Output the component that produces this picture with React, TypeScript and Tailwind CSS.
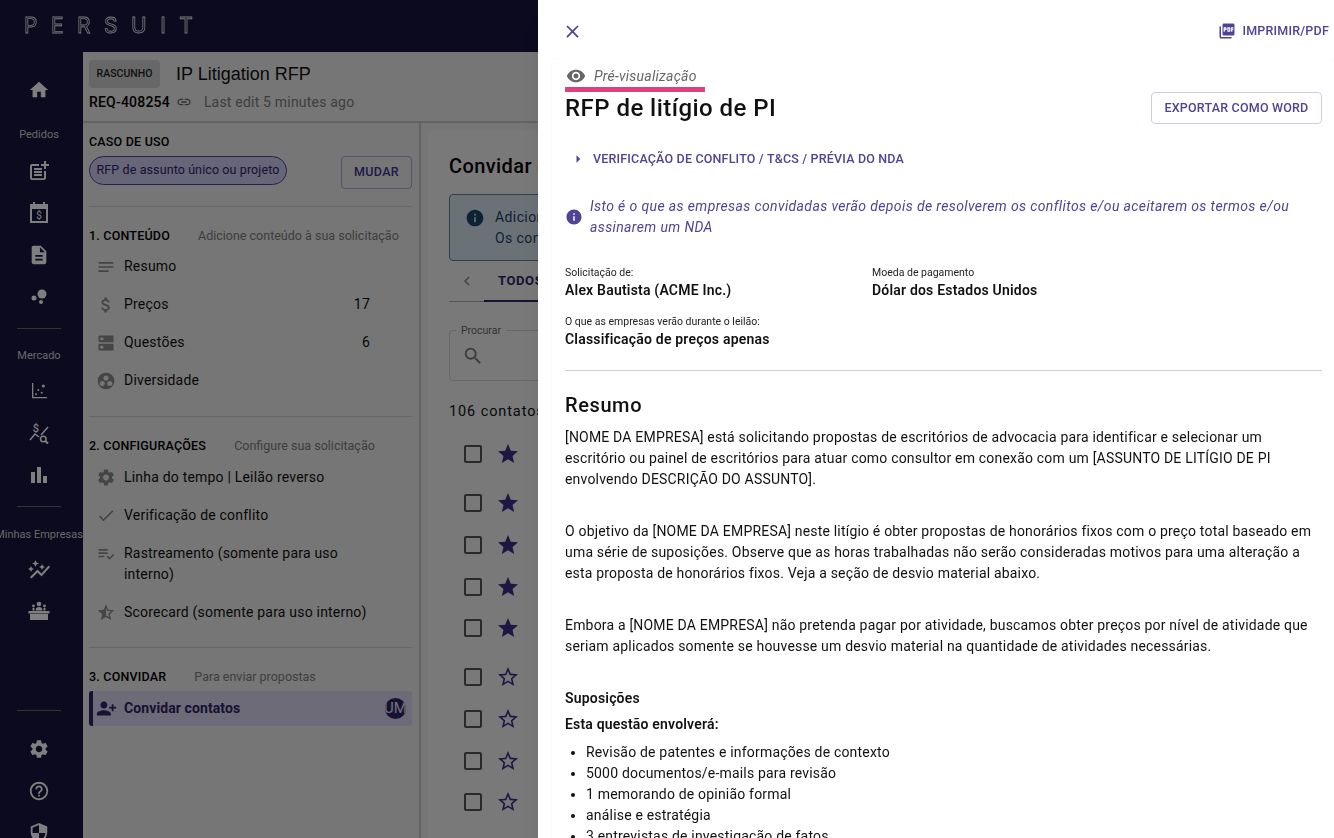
import type { ReactNode } from "react";
import {
  MdHome, MdPostAdd, MdDescription, MdBarChart, MdSettings, MdHelpOutline, MdSecurity, MdClose,
  MdPictureAsPdf, MdVisibility, MdInfo, MdArrowRight, MdSearch, MdStar, MdStarBorder,
  MdCheckBoxOutlineBlank, MdChevronLeft, MdLink, MdNotes, MdAttachMoney, MdDns, MdPersonAdd,
  MdCheck, MdStarHalf, MdPlaylistAddCheck, MdAutoGraph,
} from "react-icons/md";

function CalendarDollar() {
  return (
    <svg viewBox="0 0 24 24" className="h-6 w-6" fill="currentColor">
      <path d="M6 1h2v2h8V1h2v2h3v19H3V3h3V1zM5 8v12h14V8H5z" />
      <text x="12" y="18" fontSize="10" textAnchor="middle" fontFamily="Roboto, sans-serif">$</text>
    </svg>
  );
}

function Bubbles() {
  return (
    <svg viewBox="0 0 24 24" className="h-6 w-6" fill="currentColor">
      <circle cx="15" cy="9" r="4.500" />
      <circle cx="7" cy="13" r="2.500" />
      <circle cx="14" cy="17" r="2" />
    </svg>
  );
}

function Scatter() {
  return (
    <svg viewBox="0 0 24 24" className="h-6 w-6" fill="currentColor">
      <path d="M5 4h1.300v14H20v1.300H5z" />
      <circle cx="16.300" cy="7" r="1.500" />
      <circle cx="11.300" cy="11" r="1" />
      <circle cx="14.700" cy="13.700" r="1" />
      <circle cx="9" cy="15.300" r="1" />
    </svg>
  );
}

function PriceSearch() {
  return (
    <svg viewBox="0 0 24 24" className="h-6 w-6" fill="none" stroke="currentColor" strokeWidth="1.500">
      <path d="M3 19l5-6 4 3" />
      <path d="M21 6l-7 8" />
      <circle cx="16.300" cy="18" r="2.800" />
      <path d="M18.300 20l2.700 2.500" strokeWidth="2" />
      <text x="9" y="11" fontSize="11" fontWeight="500" textAnchor="middle" fill="currentColor" stroke="none" fontFamily="Roboto, sans-serif">$</text>
    </svg>
  );
}

function Podium() {
  return (
    <svg viewBox="0 0 24 24" className="h-6 w-6" fill="currentColor">
      <circle cx="12" cy="4" r="2.300" />
      <circle cx="6.500" cy="6" r="1.400" />
      <circle cx="17.500" cy="6" r="1.400" />
      <path d="M8.500 10.500c0-2.500 1.500-3.500 3.500-3.500s3.500 1 3.500 3.500h-7zM5.500 10.500V8h2v2.500h-2zM16.500 10.500V8h2v2.500h-2z" />
      <path d="M1.500 11h21v2.500h-21zM3 14h18v6H3z" />
    </svg>
  );
}

function DiversityDots() {
  return (
    <svg viewBox="0 0 24 24" className="h-[22px] w-[22px]" fill="currentColor">
      <path fillRule="evenodd" d="M12 2a10 10 0 1 0 0 20 10 10 0 0 0 0-20zm0 3.500a3 3 0 1 1 0 6 3 3 0 0 1 0-6zM7.500 12a3 3 0 1 1 0 6 3 3 0 0 1 0-6zm9 0a3 3 0 1 1 0 6 3 3 0 0 1 0-6z" />
    </svg>
  );
}

function NavIcon({ children }: { children: ReactNode }) {
  return <div className="flex h-[42px] shrink-0 items-center justify-center text-white">{children}</div>;
}

function NavLabel({ children, className }: { children: ReactNode; className: string }) {
  return <div className={`flex shrink-0 justify-center text-[11px] leading-[14px] whitespace-nowrap text-[#d0d0d0] ${className}`}>{children}</div>;
}

function NavDivider({ className }: { className: string }) {
  return <div className={`mx-[17px] h-px shrink-0 bg-[#666] ${className}`} />;
}

function Sidebar() {
  return (
    <aside className="flex w-[83px] shrink-0 flex-col overflow-hidden pr-[5px] pt-[17px]">
      <NavIcon><MdHome size={22} /></NavIcon>
      <NavLabel className="pt-[17px] pb-[8px]">Pedidos</NavLabel>
      <NavIcon><MdPostAdd size={24} /></NavIcon>
      <NavIcon><CalendarDollar /></NavIcon>
      <NavIcon><MdDescription size={22} /></NavIcon>
      <NavIcon><Bubbles /></NavIcon>
      <NavDivider className="mt-[10px]" />
      <NavLabel className="pt-[20px] pb-[7px]">Mercado</NavLabel>
      <NavIcon><Scatter /></NavIcon>
      <NavIcon><PriceSearch /></NavIcon>
      <NavIcon><MdBarChart size={24} /></NavIcon>
      <NavDivider className="mt-[10px]" />
      <NavLabel className="pt-[21px] pb-[7px]">Minhas Empresas</NavLabel>
      <NavIcon><MdAutoGraph size={24} /></NavIcon>
      <NavIcon><Podium /></NavIcon>
      <NavDivider className="mt-[77px]" />
      <div className="mt-[17px] shrink-0">
        <NavIcon><MdSettings size={22} /></NavIcon>
        <NavIcon><MdHelpOutline size={22} /></NavIcon>
        <NavIcon><MdSecurity size={22} /></NavIcon>
      </div>
    </aside>
  );
}

function SectionHead({ title, hint, className }: { title: string; hint: string; className: string }) {
  return (
    <div className={`flex items-center gap-[28px] text-[12.5px] leading-[18px] ${className}`}>
      <span className="font-medium tracking-[0.2px] text-black">{title}</span>
      <span className="text-[#7c7c7c]">{hint}</span>
    </div>
  );
}

function Row({ icon, label, count, labelClass = "" }: { icon: ReactNode; label: string; count?: string; labelClass?: string }) {
  return (
    <div className="flex items-start pl-[7px] text-[14px] leading-[21px] tracking-[0.2px] text-[#111]">
      <span className="mr-[8px] flex h-[21px] w-[20px] shrink-0 items-center justify-center text-[#8a8a8a]">{icon}</span>
      <span className={`flex-1 ${labelClass}`}>{label}</span>
      {count && <span className="pr-[42px]">{count}</span>}
    </div>
  );
}

function RequestHeader() {
  return (
    <div className="h-[71px] border-b-2 border-[#c6c6c6] pl-[6px] pt-[8px]">
      <div className="flex items-center">
        <span className="flex h-[28px] w-[71px] items-center justify-center rounded bg-[#cfcfcf] text-[10.500px] font-medium text-[#222]">RASCUNHO</span>
        <span className="ml-[16px] font-['Liberation_Sans',sans-serif] text-[18px] text-[#111]">IP Litigation RFP</span>
      </div>
      <div className="mt-[4px] flex items-center text-[14px] leading-[20px]">
        <span className="font-medium tracking-[0.2px] text-black">REQ-408254</span>
        <MdLink size={16} className="ml-[6px] text-[#666]" />
        <span className="ml-[12px] tracking-[0.2px] text-[#7c7c7c]">Last edit 5 minutes ago</span>
      </div>
    </div>
  );
}

function LeftPane() {
  return (
    <div className="w-[338px] shrink-0 border-r-2 border-[#c6c6c6] pl-[6px] pr-[7px] pt-[10px]">
      <div className="text-[12.500px] font-medium leading-[18px] tracking-[0.2px] text-black">CASO DE USO</div>
      <div className="mt-[5px] flex items-start justify-between">
        <span className="flex h-[29px] w-[198px] items-center justify-center rounded-full border border-[#4f4396] bg-[#cfcaf0] text-[12.500px] tracking-[0.1px] text-[#2e2268]">RFP de assunto único ou projeto</span>
        <span className="flex h-[33px] w-[71px] items-center justify-center rounded border border-[#a9a5cf] text-[12.500px] font-medium tracking-[0.3px] text-[#40358a]">MUDAR</span>
      </div>
      <div className="mt-[17px] h-px bg-[#cfcfcf]" />
      <SectionHead title="1. CONTEÚDO" hint="Adicione conteúdo à sua solicitação" className="mt-[20px]" />
      <div className="mt-[11px] flex flex-col gap-[17px]">
        <Row icon={<MdNotes size={22} />} label="Resumo" />
        <Row icon={<MdAttachMoney size={22} />} label="Preços" count="17" />
        <Row icon={<MdDns size={22} />} label="Questões" count="6" />
        <Row icon={<DiversityDots />} label="Diversidade" />
      </div>
      <div className="mt-[25px] h-px bg-[#cfcfcf]" />
      <SectionHead title="2. CONFIGURAÇÕES" hint="Configure sua solicitação" className="mt-[20px]" />
      <div className="mt-[12px] flex flex-col gap-[17px]">
        <Row icon={<MdSettings size={21} />} label="Linha do tempo | Leilão reverso" />
        <Row icon={<MdCheck size={21} />} label="Verificação de conflito" />
        <Row icon={<MdPlaylistAddCheck size={20} />} label="Rastreamento (somente para uso interno)" labelClass="pr-[50px]" />
        <Row icon={<MdStarHalf size={21} />} label="Scorecard (somente para uso interno)" />
      </div>
      <div className="mt-[24px] h-px bg-[#cfcfcf]" />
      <SectionHead title="3. CONVIDAR" hint="Para enviar propostas" className="mt-[20px]" />
      <div className="mt-[5px] flex h-[35px] items-center rounded-[3px] border-l-4 border-[#2e2268] bg-[#d9d6ee] pl-[3px] pr-[6px] text-[14px] font-bold tracking-[0.1px] text-[#2e2268]">
        <MdPersonAdd size={21} className="mr-[7px] -scale-x-100" />
        Convidar contatos
        <span className="ml-auto flex h-[21px] w-[21px] items-center justify-center overflow-hidden rounded-full bg-[#2e2268] text-[15px] font-normal text-[#e8e8e8]">UM</span>
      </div>
    </div>
  );
}

const contactRows = [
  { fav: true, gap: "mt-[0px]" },
  { fav: true, gap: "mt-[25px]" },
  { fav: true, gap: "mt-[18px]" },
  { fav: true, gap: "mt-[18px]" },
  { fav: true, gap: "mt-[17px]" },
  { fav: false, gap: "mt-[25px]" },
  { fav: false, gap: "mt-[18px]" },
  { fav: false, gap: "mt-[18px]" },
  { fav: false, gap: "mt-[17px]" },
];

function InvitePane() {
  return (
    <div className="flex-1 pl-[7px] pt-[7px]">
      <div className="h-[830px] w-[300px] rounded-t-md bg-[#f2f2f2] pl-[21px] pt-[24px]">
        <div className="text-[20px] font-medium leading-[24px] tracking-[0.4px] text-black whitespace-nowrap">Convidar contatos</div>
        <div className="mt-[16px] flex h-[67px] w-[400px] rounded border border-[#5f7f9f] bg-[#d5e3ef] pl-[15px] pt-[12px] text-[14px] leading-[21px] tracking-[0.4px] text-[#1a4468]">
          <MdInfo size={20} className="mr-[10px] mt-[1px] text-[#1a4468]" />
          <div>Adicione contatos<br />Os contatos</div>
        </div>
        <div className="relative flex h-[41px] w-[400px] items-center border-b border-[#aaa] text-[13px]">
          <MdChevronLeft size={18} className="ml-[9px] text-[#888]" />
          <span className="ml-[22px] font-bold tracking-[0.6px] text-[#2e2268]">TODOS</span>
          <span className="absolute -bottom-px left-[35px] h-[2px] w-[200px] bg-[#2e2268]" />
        </div>
        <div className="relative mt-[28px] flex h-[51px] w-[400px] items-center rounded border border-[#cfcfcf] pl-[12px]">
          <span className="absolute -top-[7px] left-[6px] bg-[#f2f2f2] px-[5px] text-[10.500px] leading-[13px] text-[#666]">Procurar</span>
          <MdSearch size={22} className="text-[#777]" />
        </div>
        <div className="mt-[21px] whitespace-nowrap text-[14.500px] leading-[20px] tracking-[0.9px] text-[#111]">106 contatos</div>
        <div className="mt-[20px] flex flex-col pl-[12px]">
          {contactRows.map((row, i) => (
            <div key={i} className={`flex h-[24px] items-center gap-[11px] ${row.gap}`}>
              <MdCheckBoxOutlineBlank size={24} className="text-[#555]" />
              {row.fav ? <MdStar size={24} className="text-[#3b2e85]" /> : <MdStarBorder size={24} className="text-[#3b2e85]" />}
            </div>
          ))}
        </div>
      </div>
    </div>
  );
}

function Meta({ label, value, className = "" }: { label: string; value: string; className?: string }) {
  return (
    <div className={className}>
      <div className="text-[10.500px] leading-[14px] text-[#222]">{label}</div>
      <div className="text-[14px] font-semibold leading-[20px] tracking-[0.2px] text-[#111]">{value}</div>
    </div>
  );
}

function Preview() {
  return (
    <div className="absolute top-0 right-0 h-full w-[796px] overflow-hidden bg-white shadow-xl">
      <div className="flex h-[59px] items-center justify-between pl-[24px] pr-[5px] pt-[3px]">
        <MdClose size={21} className="text-[#4f4396]" />
        <div className="flex items-center gap-[7px] text-[12.500px] font-medium tracking-[0.2px] text-[#4f4396]">
          <MdPictureAsPdf size={18} />
          IMPRIMIR/PDF
        </div>
      </div>
      <div className="ml-[14px] rounded-t bg-white pl-[13px] pr-[12px] shadow-[0_0_2px_rgba(0,0,0,0.05)]">
        <div className="flex h-[33px] w-[140px] items-center gap-[8px] border-b-[5px] border-[#dc4180] pl-[1px] pt-[6px] text-[14px] italic tracking-[0.25px] text-[#666]">
          <MdVisibility size={20} className="shrink-0" />
          Pré-visualização
        </div>
        <div className="flex items-start justify-between">
          <h1 className="mt-[1px] text-[24px] font-medium leading-[31px] tracking-[0.45px] text-[#111]">RFP de litígio de PI</h1>
          <button className="h-[32px] w-[171px] rounded border border-[#cfcbe6] text-[12.500px] font-medium tracking-[0.2px] text-[#4f4396]">EXPORTAR COMO WORD</button>
        </div>
        <div className="mt-[26px] flex items-center pl-[4px] text-[12.500px] font-medium leading-[18px] tracking-[0.18px] text-[#4f4396]">
          <MdArrowRight size={18} className="mr-[6px]" />
          VERIFICAÇÃO DE CONFLITO / T&amp;CS / PRÉVIA DO NDA
        </div>
        <div className="mt-[28px] flex items-center text-[14px] italic leading-[21px] tracking-[0.38px] text-[#4f4396]">
          <MdInfo size={18} className="mr-[7px] shrink-0" />
          <p className="w-[720px]">Isto é o que as empresas convidadas verão depois de resolverem os conflitos e/ou aceitarem os termos e/ou assinarem um NDA</p>
        </div>
        <div className="mt-[28px] flex">
          <Meta label="Solicitação de:" value="Alex Bautista (ACME Inc.)" className="w-[307px]" />
          <Meta label="Moeda de pagamento" value="Dólar dos Estados Unidos" />
        </div>
        <Meta label="O que as empresas verão durante o leilão:" value="Classificação de preços apenas" className="mt-[15px]" />
        <div className="mt-[21px] h-px bg-[#cfcfcf]" />
        <h2 className="mt-[20px] text-[20px] font-medium leading-[28px] tracking-[0.6px] text-[#111]">Resumo</h2>
        <div className="mt-[8px] text-[14px] leading-[21px] tracking-[0.19px] text-[#111]">
          <p>[NOME DA EMPRESA] está solicitando propostas de escritórios de advocacia para identificar e selecionar um escritório ou painel de escritórios para atuar como consultor em conexão com um [ASSUNTO DE LITÍGIO DE PI envolvendo DESCRIÇÃO DO ASSUNTO].</p>
          <p className="mt-[31px]">O objetivo da [NOME DA EMPRESA] neste litígio é obter propostas de honorários fixos com o preço total baseado em uma série de suposições. Observe que as horas trabalhadas não serão consideradas motivos para uma alteração a esta proposta de honorários fixos. Veja a seção de desvio material abaixo.</p>
          <p className="mt-[31px]">Embora a [NOME DA EMPRESA] não pretenda pagar por atividade, buscamos obter preços por nível de atividade que seriam aplicados somente se houvesse um desvio material na quantidade de atividades necessárias.</p>
          <p className="mt-[31px] font-semibold">Suposições</p>
          <p className="mt-[5px] font-semibold">Esta questão envolverá:</p>
          <ul className="mt-[7px] list-disc pl-[21px]">
            <li>Revisão de patentes e informações de contexto</li>
            <li>5000 documentos/e-mails para revisão</li>
            <li>1 memorando de opinião formal</li>
            <li>análise e estratégia</li>
            <li>3 entrevistas de investigação de fatos</li>
          </ul>
        </div>
      </div>
    </div>
  );
}

export default function App() {
  return (
    <div className="relative h-[838px] w-[1334px] overflow-hidden bg-[#18143f] font-['Roboto',sans-serif]">
      <header className="flex h-[52px] items-center pl-[24px]">
        <span className="font-['Inter',sans-serif] text-[21px] font-normal tracking-[13.500px] text-transparent opacity-90 will-change-transform [-webkit-text-stroke:0.8px_#ffffff]">PERSUIT</span>
      </header>
      <div className="flex h-[786px]">
        <Sidebar />
        <div className="flex-1 bg-[#ececec]">
          <RequestHeader />
          <div className="flex h-[715px]">
            <LeftPane />
            <InvitePane />
          </div>
        </div>
      </div>
      <div className="absolute inset-0 bg-black/50" />
      <Preview />
    </div>
  );
}
